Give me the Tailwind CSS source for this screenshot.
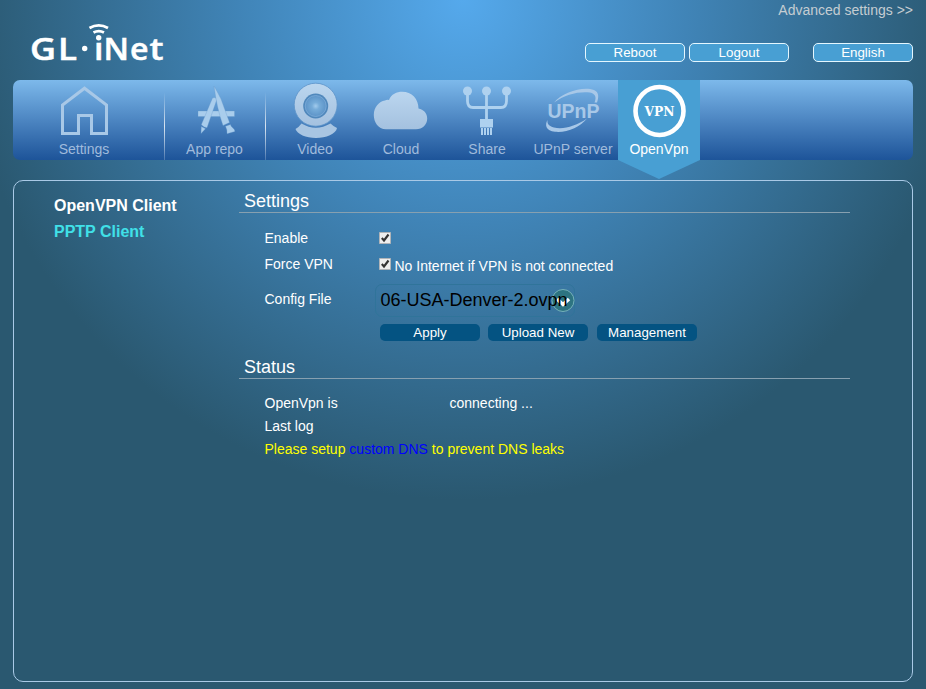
<!DOCTYPE html>
<html lang="en">
<head>
<meta charset="utf-8">
<title>GL-iNet</title>
<script src="https://cdn.jsdelivr.net/npm/@tailwindcss/browser@4"></script>
</head>
<body class="h-[689px] overflow-hidden bg-[#2a5870] bg-[radial-gradient(circle_500px_at_50%_0,#55a9ec_0%,#4084b7_45%,#2a5870_100%)] px-[13px] font-['Liberation_Sans',sans-serif] text-[14px] leading-4 text-white">
<header class="flex h-20 justify-between">
  <svg class="mt-[18px] ml-[13px] h-[50px] w-[145px]" viewBox="26 18 145 50" fill="#fff">
    <g font-family="Open Sans, Noto Sans, sans-serif" font-weight="600" font-size="31" stroke="#fff" stroke-width=".5">
      <text x="30" y="59.500" textLength="26" lengthAdjust="spacingAndGlyphs">G</text>
      <text x="58" y="59.500" textLength="19" lengthAdjust="spacingAndGlyphs">L</text>
      <text x="94" y="59.500" textLength="9.500" lengthAdjust="spacingAndGlyphs">ı</text>
      <text x="103.500" y="59.500" textLength="25.500" lengthAdjust="spacingAndGlyphs">N</text>
      <text x="130" y="59.500" textLength="18.500" lengthAdjust="spacingAndGlyphs">e</text>
      <text x="149.500" y="59.500" textLength="14" lengthAdjust="spacingAndGlyphs">t</text>
    </g>
    <circle cx="84.700" cy="48.500" r="2.700"/><circle cx="98.700" cy="37.800" r="2.700"/>
    <path d="M89.500 28Q98.700 22.800 108 28M93.500 32.500Q98.700 29.800 104 32.500" fill="none" stroke="#fff" stroke-width="2.800"/>
  </svg>
  <div class="flex flex-col items-end">
    <a class="mt-0.5 text-[#c5cdd2]">Advanced settings &gt;&gt;</a>
    <div class="mt-[25px] flex text-[13.333px]">
      <button class="mr-1 h-[19px] w-[100px] rounded-[5px] border border-[#e4f7ff] bg-[#489fd3] leading-[17px]">Reboot</button>
      <button class="mr-6 h-[19px] w-[100px] rounded-[5px] border border-[#e4f7ff] bg-[#489fd3] leading-[17px]">Logout</button>
      <button class="h-[19px] w-[100px] rounded-[5px] border border-[#e4f7ff] bg-[#489fd3] leading-[17px]">English</button>
    </div>
  </div>
</header>

<nav class="flex h-20 rounded-[7px] bg-linear-to-b from-[#7db9eb] to-[#1d5499] text-[#a0bbdc]">
  <a class="flex w-[142px] flex-col items-center">
    <svg class="h-[61px] w-[60px]" viewBox="54 80 60 61" fill="none" stroke="#a8c8e7" stroke-width="3"><path d="M62.500 133.500V105L84.500 88.200 106.500 105V133.500H91.500V115.500H78.500V133.500Z"/></svg>
    <span>Settings</span>
  </a>
  <div class="mt-3 ml-[9px] h-[68px] w-px bg-linear-to-b from-white/0 via-white/80 to-white/20"></div>
  <a class="flex w-[99px] flex-col items-center">
    <svg class="h-[61px] w-[60px]" viewBox="184 80 60 61" fill="#a9cdec" stroke="#6496c8" stroke-width=".3">
      <path d="M197 111H233.500V116.500H197Z"/>
      <path d="M211.500 98Q214 96.500 216 99L206 127.800Q203 127.500 200.300 124.800Z"/>
      <path d="M200.300 126.500 204.500 128.800 200 133.500Z"/>
      <path d="M213 86Q216 91 220 99L228.500 122.500 222 125.500Q216 109 213 86Z"/>
      <path d="M224.500 126.200 229.500 124.500C230 128 234 128 233.800 131.500L226 133.700Q226.500 130 224.500 126.200Z"/>
    </svg>
    <span>App repo</span>
  </a>
  <div class="mt-3 ml-px h-[68px] w-px bg-linear-to-b from-white/0 via-white/80 to-white/20"></div>
  <a class="ml-1.5 flex w-[86px] flex-col items-center">
    <svg class="h-[61px] w-[60px]" viewBox="285 80 60 61">
      <defs><linearGradient id="pale" x2="0" y2="1"><stop stop-color="#bbd6ef"/><stop offset="1" stop-color="#a4c1df"/></linearGradient><radialGradient id="lens"><stop stop-color="#a2cbed"/><stop offset=".35" stop-color="#76acd9"/><stop offset="1" stop-color="#5d94c8"/></radialGradient></defs>
      <path d="M301.500 123.500Q315.700 132 330.500 123.500Q333 126 337 128C336 134 326 138 316 138S297 134 295.500 129Q299 127 301.500 123.500Z" fill="#a8c5e2"/>
      <circle cx="315.700" cy="104.700" r="21.500" fill="url(#pale)" stroke="#5c93c9" stroke-width=".8"/>
      <circle cx="315.700" cy="106" r="12.500" fill="#5088bc"/><circle cx="315.700" cy="106" r="10.500" fill="url(#lens)" stroke="#82b0dc" stroke-width=".7"/>
    </svg>
    <span>Video</span>
  </a>
  <a class="flex w-[86px] flex-col items-center">
    <svg class="h-[61px] w-[60px]" viewBox="371 80 60 61"><path d="M386 129.300C378 129.300 373.800 122 373.800 115C373.800 107 379 101.500 385 100.500Q387 99.500 389 100C391 94 397 91.700 402 91.700C412 91.700 418.500 99 418.500 108.500C423.500 109.500 427.200 113 427.200 118.500C427.200 124.500 422.500 129.300 416 129.300Z" fill="url(#pale)"/></svg>
    <span>Cloud</span>
  </a>
  <a class="flex w-[86px] flex-col items-center">
    <svg class="h-[61px] w-[60px]" viewBox="457 80 60 61" fill="#aed1ef">
      <path d="M467.500 91V101Q467.500 107.500 473 107.500H501Q506.500 107.500 506.500 101V91M486.500 91V120" fill="none" stroke="#aed1ef" stroke-width="2.800"/>
      <circle cx="467.500" cy="91" r="4.500"/><circle cx="486.500" cy="91" r="4.500"/><circle cx="506.500" cy="91" r="4.500"/>
      <path d="M480 119H493V127.500H480ZM481 128H483V135H481ZM484 128H486V135H484ZM487 128H489V135H487ZM490 128H492V135H490Z"/>
    </svg>
    <span>Share</span>
  </a>
  <a class="flex w-[86px] flex-col items-center">
    <svg class="h-[61px] w-[60px]" viewBox="543 80 60 61" fill="#a8c8e8">
      <path d="M554 102.500C563 92 583 86 594 90C599 92 599 97 597 102.500L594.500 102.500C597 97 595 93.500 590 92.500C580 91 565 94 554 102.500ZM547.500 120C544.500 125 546 131 555 131.800C567 133 580 127 587 118.500C576 126 563 130 554 127.500C549 126 547 124 547.500 120Z"/>
      <text x="547.500" y="118.300" font-family="Liberation Sans, sans-serif" font-size="20.500" font-weight="700" textLength="52" lengthAdjust="spacingAndGlyphs">UPnP</text>
    </svg>
    <span>UPnP server</span>
  </a>
  <a class="relative ml-0.5 flex w-[82px] flex-col items-center bg-[#489fd3] text-white">
    <svg class="h-[61px] w-[60px]" viewBox="629 80 60 61" fill="#fff">
      <circle cx="659.500" cy="111" r="24" fill="none" stroke="#fff" stroke-width="4.600"/>
      <text x="644.500" y="115.500" font-family="DejaVu Serif, serif" font-size="12.500" font-weight="700" textLength="30" lengthAdjust="spacingAndGlyphs">VPN</text>
    </svg>
    <span>OpenVpn</span>
    <svg class="absolute top-20 left-0 z-10 h-[19px] w-[82px]" viewBox="0 0 82 19"><path d="M0 0H82L41 19Z" fill="#489fd3"/></svg>
  </a>
</nav>

<main class="mt-5 flex h-[502px] rounded-[10px] border border-[#a9c9e6]">
  <aside class="w-[225px] pt-3 pl-10 text-[16px] leading-[26px] font-bold">
    <div>OpenVPN Client</div>
    <div class="text-[#40e0e8]">PPTP Client</div>
  </aside>
  <div class="w-[611px]">
    <h2 class="mt-2 h-[24px] border-b border-[#87a0b0] pl-[5px] text-[18px] leading-6">Settings</h2>
    <div class="mt-[17px] flex h-[26px] pl-[25.500px]">
      <span class="w-[114.500px]">Enable</span>
      <svg class="mt-0.5 size-3" viewBox="0 0 12 12"><path d="M.5.5H11.500V11.500H.5Z" fill="#eee" stroke="#b0b4b8"/><path d="M2.800 6 5 8.500 9.500 2.500" fill="none" stroke="#333" stroke-width="2.100"/></svg>
    </div>
    <div class="flex h-[28px] pl-[25.500px]">
      <span class="w-[114.500px]">Force VPN</span>
      <svg class="mt-0.5 size-3" viewBox="0 0 12 12"><path d="M.5.5H11.500V11.500H.5Z" fill="#eee" stroke="#b0b4b8"/><path d="M2.800 6 5 8.500 9.500 2.500" fill="none" stroke="#333" stroke-width="2.100"/></svg>
      <span class="mt-0.5 ml-[3.500px]">No Internet if VPN is not connected</span>
    </div>
    <div class="flex pl-[25.500px]">
      <span class="w-[110.500px] pt-[7px]">Config File</span>
      <div class="relative h-[33px] w-[200px] rounded-[7px] border border-[#30749a] pl-[4.500px] text-[18px] leading-[31px] text-black">
        <svg class="absolute top-[3px] -right-px size-6" viewBox="0 0 24 24"><circle cx="12" cy="12.500" r="11" fill="#2d7481" stroke="#75b1ba"/><path d="M6 11 12 16.500 18 11" fill="none" stroke="#fff" stroke-width="3.500"/></svg>
        <span class="relative">06-USA-Denver-2.ovpn</span>
      </div>
    </div>
    <div class="mt-[7px] flex gap-2 pl-[141px] text-[13.333px]">
      <button class="h-[17px] w-[100px] rounded-[5px] bg-[#045382] leading-[17px]">Apply</button>
      <button class="h-[17px] w-[100px] rounded-[5px] bg-[#045382] leading-[17px]">Upload New</button>
      <button class="ml-px h-[17px] w-[100px] rounded-[5px] bg-[#045382] leading-[17px]">Management</button>
    </div>
    <h2 class="mt-[14px] h-[24px] border-b border-[#87a0b0] pl-[5px] text-[18px] leading-6">Status</h2>
    <div class="mt-4 flex h-[23px] pl-[25.500px]"><span class="w-[185px]">OpenVpn is</span><span>connecting ...</span></div>
    <div class="h-[23px] pl-[25.500px]">Last log</div>
    <div class="pl-[25.500px] text-[#ff0]">Please setup <a class="text-[#00f]">custom DNS</a> to prevent DNS leaks</div>
  </div>
</main>
</body>
</html>
